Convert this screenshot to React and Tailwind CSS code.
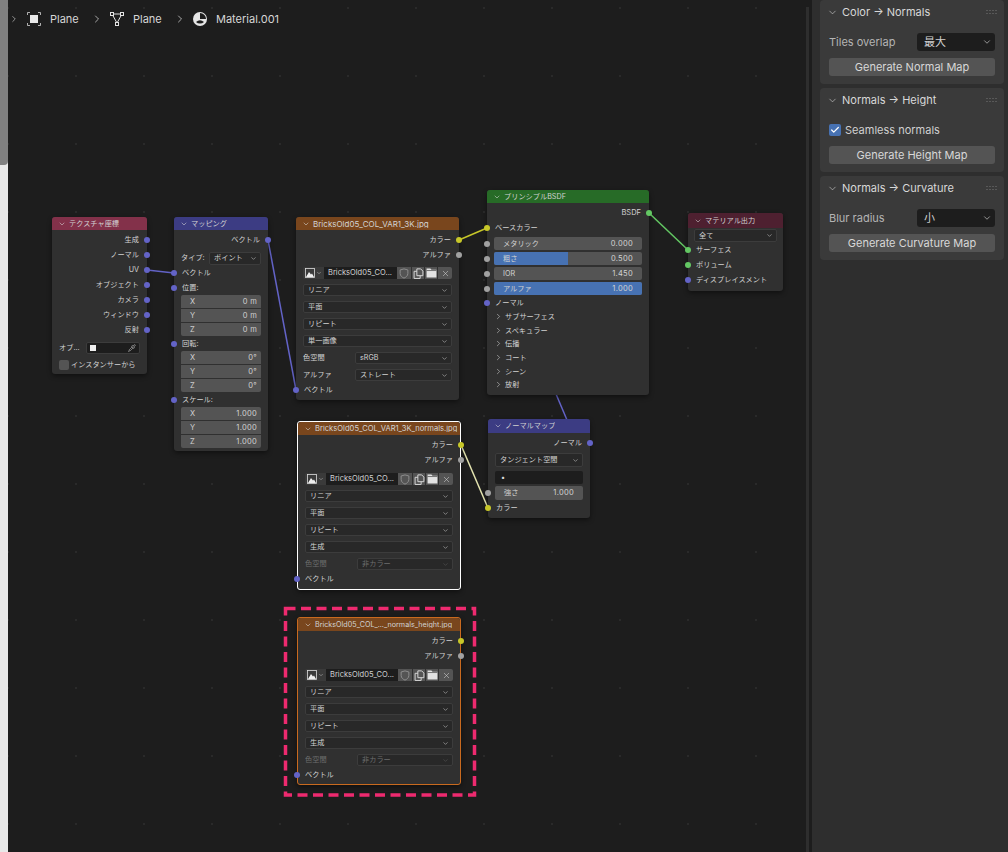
import { ChevronDown, ChevronRight, Check, Pipette, X } from 'lucide-react';

const FONT = "font-[Inter,'Noto_Sans_CJK_JP',sans-serif]";

const YELLOW = 'bg-[#c7c729]';
const GRAY = 'bg-[#a1a1a1]';
const PURPLE = 'bg-[#6363c7]';
const GREEN = 'bg-[#63c763]';

const Socket = ({ color, side }) => (
  <span
    className={`absolute top-1/2 size-[6px] -translate-y-1/2 rounded-full ${color} ${
      side === 'left' ? 'left-[-3px]' : 'right-[-3px]'
    }`}
  />
);

const Output = ({ label, color = PURPLE, className = '' }) => (
  <div className={`relative flex h-[15px] items-center justify-end pr-[8px] ${className}`}>
    {label}
    <Socket color={color} side="right" />
  </div>
);

const Input = ({ label, color = PURPLE, className = '' }) => (
  <div className={`relative flex h-[15px] items-center pl-[8px] ${className}`}>
    {label}
    <Socket color={color} side="left" />
  </div>
);

const Dropdown = ({ label, className = '', dim = false }) => (
  <div
    className={`flex items-center justify-between rounded-[2px] border border-[#3c3c3c] bg-[#282828] pl-[4px] pr-[3px] ${
      dim ? 'text-[#6e6e6e]' : ''
    } ${className}`}
  >
    <span>{label}</span>
    <ChevronDown size={7} strokeWidth={2} className={dim ? 'text-[#555555]' : 'text-[#c0c0c0]'} />
  </div>
);

const Node = ({ title, header, className = '', children, titleClass = '' }) => (
  <div
    className={`absolute rounded-[3px] bg-[#303030] text-[7.2px] leading-none text-[#d2d2d2] shadow-[0_2px_5px_rgba(0,0,0,0.45)] ${className}`}
  >
    <div className={`flex h-[13px] items-center gap-[3px] rounded-t-[3px] pl-[6px] ${header}`}>
      <ChevronDown size={8} strokeWidth={1.6} className="shrink-0 text-[#dddddd]" />
      <span className={`truncate ${titleClass}`}>{title}</span>
    </div>
    {children}
  </div>
);

const XYZ = ({ values }) => (
  <div className="mx-[7px] flex flex-col gap-px overflow-hidden rounded-[2px] text-[7.5px]">
    {['X', 'Y', 'Z'].map((axis, i) => (
      <div key={axis} className="flex h-[13px] items-center justify-between bg-[#545454] pl-[9px] pr-[4px]">
        <span>{axis}</span>
        <span className="tracking-[0.3px]">{values[i]}</span>
      </div>
    ))}
  </div>
);

const ImageGlyph = () => (
  <svg width="10" height="10" viewBox="0 0 10 10">
    <rect x="0.5" y="0.5" width="9" height="9" fill="none" stroke="#dddddd" strokeWidth="0.8" />
    <path d="M1 9 L4 4 L6 6.5 L7 5.5 L9 9 Z" fill="#eeeeee" />
  </svg>
);

const ImageRow = ({ name, className = '' }) => (
  <div className={`mx-[7px] flex h-[12px] items-stretch overflow-hidden rounded-[2px] ${className}`}>
    <div className="flex w-[21px] shrink-0 items-center gap-px bg-[#3a3a3a] pl-[2px]">
      <ImageGlyph />
      <ChevronDown size={6} strokeWidth={2} className="text-[#c0c0c0]" />
    </div>
    <div className="flex min-w-0 flex-1 items-center whitespace-nowrap bg-[#1d1d1d] pl-[4px] text-[7.5px]">{name}</div>
    <div className="flex w-[14px] shrink-0 items-center justify-center bg-[#545454]">
      <svg width="10" height="11" viewBox="0 0 9 10" fill="none" stroke="#8e8e8e" strokeWidth="0.9">
        <path d="M4.5 0.8 L8 1.8 V5 C8 7.2 6 8.6 4.5 9.2 C3 8.6 1 7.2 1 5 V1.8 Z" />
      </svg>
    </div>
    <div className="ml-px flex w-[12px] shrink-0 items-center justify-center bg-[#545454]">
      <svg width="11" height="11" viewBox="0 0 10 10" fill="none" stroke="#d8d8d8" strokeWidth="0.9">
        <path d="M1 3 H3.5 M1 3 V9.5 H6.5 V7 M3.5 0.8 H7 L9 2.8 V7 H3.5 Z" />
      </svg>
    </div>
    <div className="ml-px flex w-[12px] shrink-0 items-center justify-center bg-[#545454]">
      <svg width="11" height="10" viewBox="0 0 10 9">
        <path d="M0.5 0.5 H4 L5 1.5 H9.5 V8.5 H0.5 Z" fill="#e2e2e2" />
        <rect x="0.5" y="2" width="9" height="0.7" fill="#545454" />
      </svg>
    </div>
    <div className="ml-px flex w-[14px] shrink-0 items-center justify-center bg-[#545454]">
      <X size={9} strokeWidth={1.5} className="text-[#d0d0d0]" />
    </div>
  </div>
);

// bordered nodes (selected / active) sit 1px inside their border, sockets stay on the edge
const ImageNode = ({ title, className, last, alpha = false, bordered = false, titleClass }) => (
  <Node title={title} header="bg-[#79461d]" className={className} titleClass={titleClass}>
    <div className="pt-[2px]">
      <Output label="カラー" color={YELLOW} className={bordered ? 'mr-[-1px]' : ''} />
      <Output label="アルファ" color={GRAY} className={bordered ? 'mr-[-1px]' : ''} />
      <ImageRow name="BricksOld05_CO..." className={bordered ? 'mt-[6px]' : 'mt-[5px]'} />
      <Dropdown label="リニア" className="mx-[7px] mt-[5px] h-[12px]" />
      <Dropdown label="平面" className="mx-[7px] mt-[5px] h-[12px]" />
      <Dropdown label="リピート" className="mx-[7px] mt-[5px] h-[12px]" />
      <Dropdown label={last} className="mx-[7px] mt-[5px] h-[12px]" />
      <div className={`mx-[7px] mt-[5px] flex h-[12px] items-center ${alpha ? '' : 'text-[#6e6e6e]'}`}>
        <span className="w-[52px]">色空間</span>
        <Dropdown label={alpha ? 'sRGB' : '非カラー'} dim={!alpha} className="h-[12px] flex-1" />
      </div>
      {alpha && (
        <div className="mx-[7px] mt-[5px] flex h-[12px] items-center">
          <span className="w-[52px]">アルファ</span>
          <Dropdown label="ストレート" className="h-[12px] flex-1" />
        </div>
      )}
      <Input label="ベクトル" className={`mt-px ${bordered ? 'ml-[-1px]' : ''}`} />
    </div>
  </Node>
);

const Slider = ({ label, value, fill = '' }) => (
  <div className="relative mx-[7px] flex h-[13px] items-center justify-between overflow-hidden rounded-[2px] bg-[#545454] px-[9px]">
    {fill && <div className={`absolute inset-y-0 left-0 bg-[#4772b3] ${fill}`} />}
    <span className="relative">{label}</span>
    <span className="relative text-[7.5px] tracking-[0.3px]">{value}</span>
  </div>
);

const SliderRow = ({ label, value, fill }) => (
  <div className="relative">
    <Slider label={label} value={value} fill={fill} />
    <Socket color={GRAY} side="left" />
  </div>
);

const SubPanel = ({ label }) => (
  <div className="flex h-[13.6px] items-center gap-[2px] pl-[7px]">
    <ChevronRight size={9} strokeWidth={1.6} className="text-[#c8c8c8]" />
    <span>{label}</span>
  </div>
);

const Wires = () => (
  <svg className="absolute inset-0" width="804" height="852" viewBox="8 0 804 852" fill="none" strokeWidth="1.5">
    <path d="M147 270 L174 273" stroke="#6363c7" />
    <path d="M268 240 L296 390" stroke="#6363c7" />
    <path d="M459 240 L487 228" stroke="#c7c729" />
    <path d="M649 213 L688 250" stroke="#63c763" />
    <path d="M556 394 L567 420" stroke="#6363c7" />
    <path d="M461 445 L488 508" stroke="#e4e4b0" />
  </svg>
);

const Breadcrumb = () => (
  <div className="absolute left-[1px] top-[12px] flex h-[14px] items-center text-[11px] text-[#d6d6d6]">
    <ChevronRight size={10} strokeWidth={1.5} />
    <svg className="ml-[8px]" width="14" height="14" viewBox="0 0 14 14" fill="none" stroke="#d6d6d6" strokeWidth="0.8">
      <path d="M0.5 3 V0.5 H3 M11 0.5 H13.5 V3 M13.5 11 V13.5 H11 M3 13.5 H0.5 V11" />
      <rect x="3" y="3" width="8" height="8" fill="#e8e8e8" stroke="none" />
    </svg>
    <span className="ml-[9px] w-[28px]">Plane</span>
    <ChevronRight className="ml-[13px]" size={12} strokeWidth={1.5} />
    <svg className="ml-[7px]" width="14" height="14" viewBox="0 0 14 14" fill="none" stroke="#e2e2e2" strokeWidth="1">
      <path d="M2 2 H12 L7 11 Z" />
      <rect x="0.5" y="0.5" width="3" height="3" fill="#1d1d1d" />
      <rect x="10.5" y="0.5" width="3" height="3" fill="#1d1d1d" />
      <rect x="5.5" y="10.5" width="3" height="3" fill="#1d1d1d" />
    </svg>
    <span className="ml-[9px] w-[28px]">Plane</span>
    <ChevronRight className="ml-[13px]" size={12} strokeWidth={1.5} />
    <svg className="ml-[7px]" width="14" height="14" viewBox="0 0 14 14">
      <circle cx="7" cy="7" r="7" fill="#e6e6e6" />
      <path d="M7 1 A6 6 0 0 1 13 7 L7 7 Z" fill="#1d1d1d" />
      <path d="M3 10 Q7 6.5 11 10 A5.8 5.8 0 0 1 3 10 Z" fill="#1d1d1d" />
    </svg>
    <span className="ml-[9px]">Material.001</span>
  </div>
);

const Grip = () => (
  <svg className="absolute right-[7px] top-[10px]" width="11" height="4" viewBox="0 0 11 4" fill="#777777">
    {[0.5, 3.5, 6.5, 9.5].map((x) => (
      <g key={x}>
        <rect x={x} y="0" width="1" height="1" />
        <rect x={x} y="3" width="1" height="1" />
      </g>
    ))}
  </svg>
);

const Card = ({ title, children, button }) => (
  <div className="relative h-[84px] rounded-[4px] bg-[#3a3a3a] px-[9px]">
    <div className="flex h-[24px] items-center gap-[4px] text-[#d8d8d8]">
      <ChevronDown size={11} strokeWidth={1.3} className="ml-[-2px]" />
      <span>{title}</span>
    </div>
    <Grip />
    <div className="mt-[9px] flex h-[18px] items-center">{children}</div>
    <div className="mt-[7px] flex h-[18px] items-center justify-center rounded-[3px] bg-[#545454] text-[#d8d8d8]">
      {button}
    </div>
  </div>
);

const PanelSelect = ({ label, value }) => (
  <>
    <span className="w-[88px] text-[#b4b4b4]">{label}</span>
    <div className="flex h-[18px] flex-1 items-center justify-between rounded-[3px] bg-[#1d1d1d] pl-[7px] pr-[3px] text-[#d0d0d0]">
      <span>{value}</span>
      <ChevronDown size={10} strokeWidth={1.6} />
    </div>
  </>
);

export default function App() {
  return (
    <div className={`flex h-[852px] w-[1008px] overflow-hidden bg-[#1d1d1d] ${FONT}`}>
      <div className="flex w-[8px] shrink-0 flex-col bg-[#e8e8e8]">
        <div className="h-[165px] rounded-br-[4px] bg-[#808080]" />
      </div>

      <main className="relative flex-1 bg-[#1d1d1d] bg-[radial-gradient(circle,#2a2a2a_0.8px,transparent_1.2px)] bg-[size:68px_68px] bg-[position:34px_42px]">
        <Breadcrumb />
        <Wires />

        <Node title="テクスチャ座標" header="bg-[#83314a]" className="left-[44px] top-[217px] h-[157px] w-[95px]">
          <div className="pt-[2px]">
            <Output label="生成" />
            <Output label="ノーマル" />
            <Output label="UV" />
            <Output label="オブジェクト" />
            <Output label="カメラ" />
            <Output label="ウィンドウ" />
            <Output label="反射" />
            <div className="mx-[7px] mt-[3px] flex h-[16px] items-center gap-[6px]">
              <span>オブ...</span>
              <div className="flex h-[12px] flex-1 items-center justify-between rounded-[2px] border border-[#3c3c3c] bg-[#1d1d1d] px-[3px]">
                <span className="size-[6px] bg-[#eeeeee]" />
                <Pipette size={8} strokeWidth={1.5} />
              </div>
            </div>
            <div className="mx-[7px] mt-[2px] flex h-[14px] items-center gap-[2px] whitespace-nowrap">
              <span className="size-[10px] rounded-[2px] bg-[#545454]" />
              <span>インスタンサーから</span>
            </div>
          </div>
        </Node>

        <Node title="マッピング" header="bg-[#3c3c83]" className="left-[166px] top-[217px] h-[234px] w-[94px]">
          <div className="pt-[2px]">
            <Output label="ベクトル" />
            <div className="mx-[7px] mt-[4px] flex h-[14px] items-center">
              <span className="w-[28px]">タイプ:</span>
              <Dropdown label="ポイント" className="h-[13px] flex-1" />
            </div>
            <Input label="ベクトル" />
            <Input label="位置:" />
            <XYZ values={['0 m', '0 m', '0 m']} />
            <Input label="回転:" />
            <XYZ values={['0°', '0°', '0°']} />
            <Input label="スケール:" />
            <XYZ values={['1.000', '1.000', '1.000']} />
          </div>
        </Node>

        <ImageNode
          title="BricksOld05_COL_VAR1_3K.jpg"
          last="単一画像"
          alpha
          titleClass="text-[8px]"
          className="left-[288px] top-[217px] h-[183px] w-[163px]"
        />
        <ImageNode
          title="BricksOld05_COL_VAR1_3K_normals.jpg"
          last="生成"
          bordered
          titleClass="text-[7.6px]"
          className="left-[289px] top-[421px] h-[169px] w-[164px] border border-white"
        />
        <ImageNode
          title="BricksOld05_COL_..._normals_height.jpg"
          last="生成"
          bordered
          titleClass="text-[7.2px]"
          className="left-[289px] top-[617px] h-[168px] w-[164px] border border-[#c96a1f]"
        />

        <Node title="プリンシプルBSDF" header="bg-[#276b27]" className="left-[479px] top-[190px] h-[205px] w-[162px]">
          <div className="pt-[2.5px]">
            <Output label="BSDF" color={GREEN} className="text-[7.5px]" />
            <Input label="ベースカラー" color={YELLOW} />
            <div className="mt-[1.5px] flex flex-col gap-[2px]">
              <SliderRow label="メタリック" value="0.000" />
              <SliderRow label="粗さ" value="0.500" fill="w-1/2" />
              <SliderRow label="IOR" value="1.450" />
              <SliderRow label="アルファ" value="1.000" fill="w-full" />
            </div>
            <Input label="ノーマル" className="mt-px !h-[14px]" />
            <SubPanel label="サブサーフェス" />
            <SubPanel label="スペキュラー" />
            <SubPanel label="伝播" />
            <SubPanel label="コート" />
            <SubPanel label="シーン" />
            <SubPanel label="放射" />
          </div>
        </Node>

        <Node title="マテリアル出力" header="bg-[#4e2030] !h-[15px]" className="left-[680px] top-[213px] h-[78px] w-[95px]">
          <Dropdown label="全て" className="mx-[6px] mt-px h-[13px]" />
          <Input label="サーフェス" color={GREEN} />
          <Input label="ボリューム" color={GREEN} />
          <Input label="ディスプレイスメント" />
        </Node>

        <Node title="ノーマルマップ" header="bg-[#3c3c83] !h-[14px]" className="left-[480px] top-[419px] h-[99px] w-[102px]">
          <div className="pt-[2px]">
            <Output label="ノーマル" />
            <Dropdown label="タンジェント空間" className="mx-[7px] mt-[3px] h-[14px]" />
            <div className="mx-[7px] mt-[4px] flex h-[13px] items-center rounded-[2px] bg-[#1d1d1d] pl-[6px] text-[#e0e0e0]">
              •
            </div>
            <div className="relative mt-[2px]">
              <div className="mx-[7px] flex h-[14px] items-center justify-between rounded-[2px] bg-[#545454] px-[9px]">
                <span>強さ</span>
                <span className="text-[7.5px] tracking-[0.3px]">1.000</span>
              </div>
              <Socket color={GRAY} side="left" />
            </div>
            <Input label="カラー" color={YELLOW} />
          </div>
        </Node>

        <svg className="absolute inset-0" width="804" height="852" viewBox="8 0 804 852" fill="none">
          <rect x="285.5" y="608.5" width="189" height="186.5" stroke="#ee2a6f" strokeWidth="3.5" strokeDasharray="10 5.5" />
        </svg>

        <div className="absolute bottom-0 right-[3px] top-[7px] w-[3px] bg-[#2e2e2e]" />
      </main>

      <aside className="flex w-[196px] shrink-0 flex-col gap-[4px] bg-[#2e2e2e] pl-[8px] pr-[4px] text-[11px]">
        <Card title="Color → Normals" button="Generate Normal Map">
          <PanelSelect label="Tiles overlap" value="最大" />
        </Card>
        <Card title="Normals → Height" button="Generate Height Map">
          <span className="flex size-[12px] items-center justify-center rounded-[2px] bg-[#4772b3]">
            <Check size={10} strokeWidth={3} className="text-white" />
          </span>
          <span className="ml-[4px] text-[#d0d0d0]">Seamless normals</span>
        </Card>
        <Card title="Normals → Curvature" button="Generate Curvature Map">
          <PanelSelect label="Blur radius" value="小" />
        </Card>
      </aside>
    </div>
  );
}
